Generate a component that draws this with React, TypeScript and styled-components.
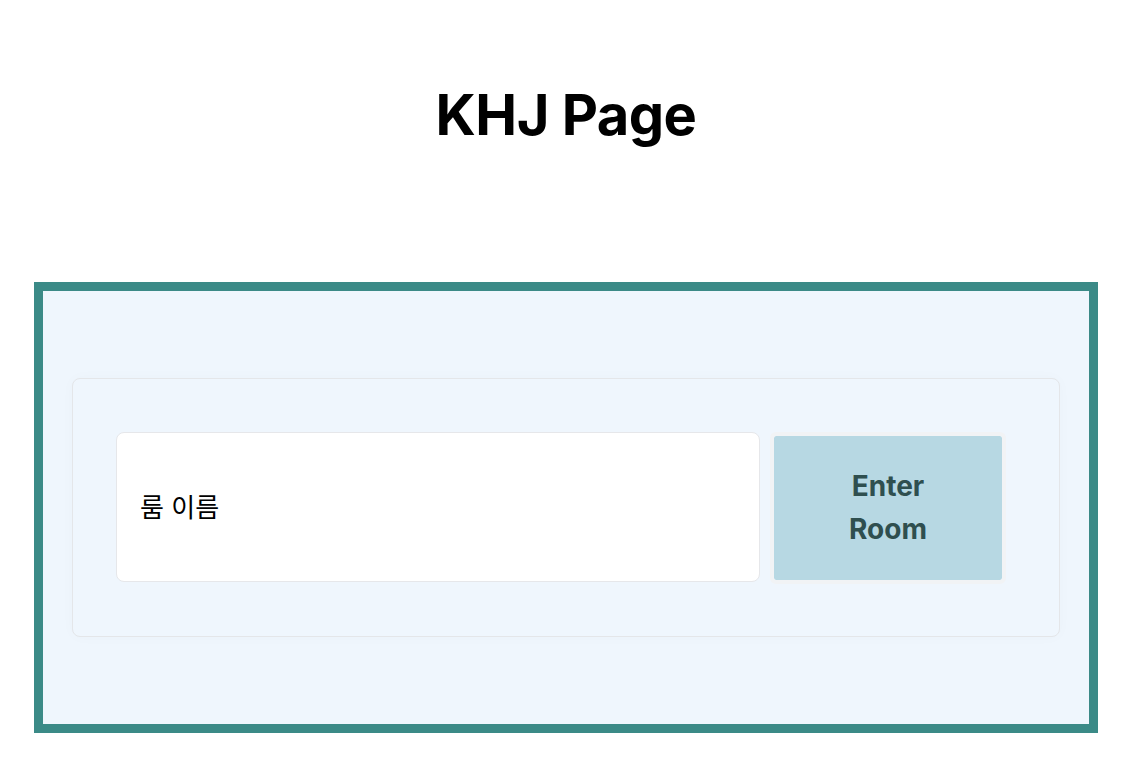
import React from 'react';
import styled, { createGlobalStyle } from 'styled-components';

const GlobalStyle = createGlobalStyle`
    body {
        margin: 0;
        background: #ffffff;
        font-family: Inter, "Noto Sans", "Noto Sans CJK KR", sans-serif;
    }
`;

const Page = styled.div`
    display: flex;
    flex-direction: column;
    padding: 87px 40px 0 34px;
`;

const Title = styled.h1`
    margin: 0;
    text-align: center;
    font-size: 56px;
    line-height: 56px;
    font-weight: 700;
    color: #000000;
    letter-spacing: -0.5px;
`;

const RoomBox = styled.section`
    margin-top: 139px;
    height: 433px;
    border: 9px solid #3b8a87;
    background: #eff6fd;
    display: flex;
    align-items: center;
    padding: 0 29px;
`;

const RoomCard = styled.div`
    flex: 1;
    display: flex;
    align-items: flex-start;
    gap: 10px;
    height: 259px;
    box-sizing: border-box;
    padding: 53px 53px 54px 43px;
    border: 1px solid #e4e6e9;
    border-radius: 8px;
    background: #eff6fd;
    box-shadow: 0 0 14px rgba(0, 0, 0, 0.025);
`;

const RoomInput = styled.input`
    flex: 1;
    height: 150px;
    box-sizing: border-box;
    padding: 0 23px;
    border: 1px solid #e6e7ea;
    border-radius: 8px;
    background: #ffffff;
    font-family: Inter, "Noto Sans CJK KR", sans-serif;
    font-size: 26px;
    color: #000000;
    outline: none;

    &::placeholder {
        color: #000000;
    }
`;

const EnterButton = styled.button`
    width: 236px;
    height: 152px;
    box-sizing: border-box;
    padding: 0 48px;
    border: 4px solid #f1f3f5;
    border-radius: 6px;
    background: #b7d8e3;
    background-clip: padding-box;
    color: #2f4f4f;
    font-family: Inter, sans-serif;
    font-size: 28px;
    line-height: 43px;
    font-weight: 700;
    cursor: pointer;
`;

export default function App() {
    return <>
        <GlobalStyle />
        <Page>
            <Title>KHJ Page</Title>
            <RoomBox>
                <RoomCard>
                    <RoomInput placeholder="룸 이름" />
                    <EnterButton>Enter Room</EnterButton>
                </RoomCard>
            </RoomBox>
        </Page>
    </>;
}
